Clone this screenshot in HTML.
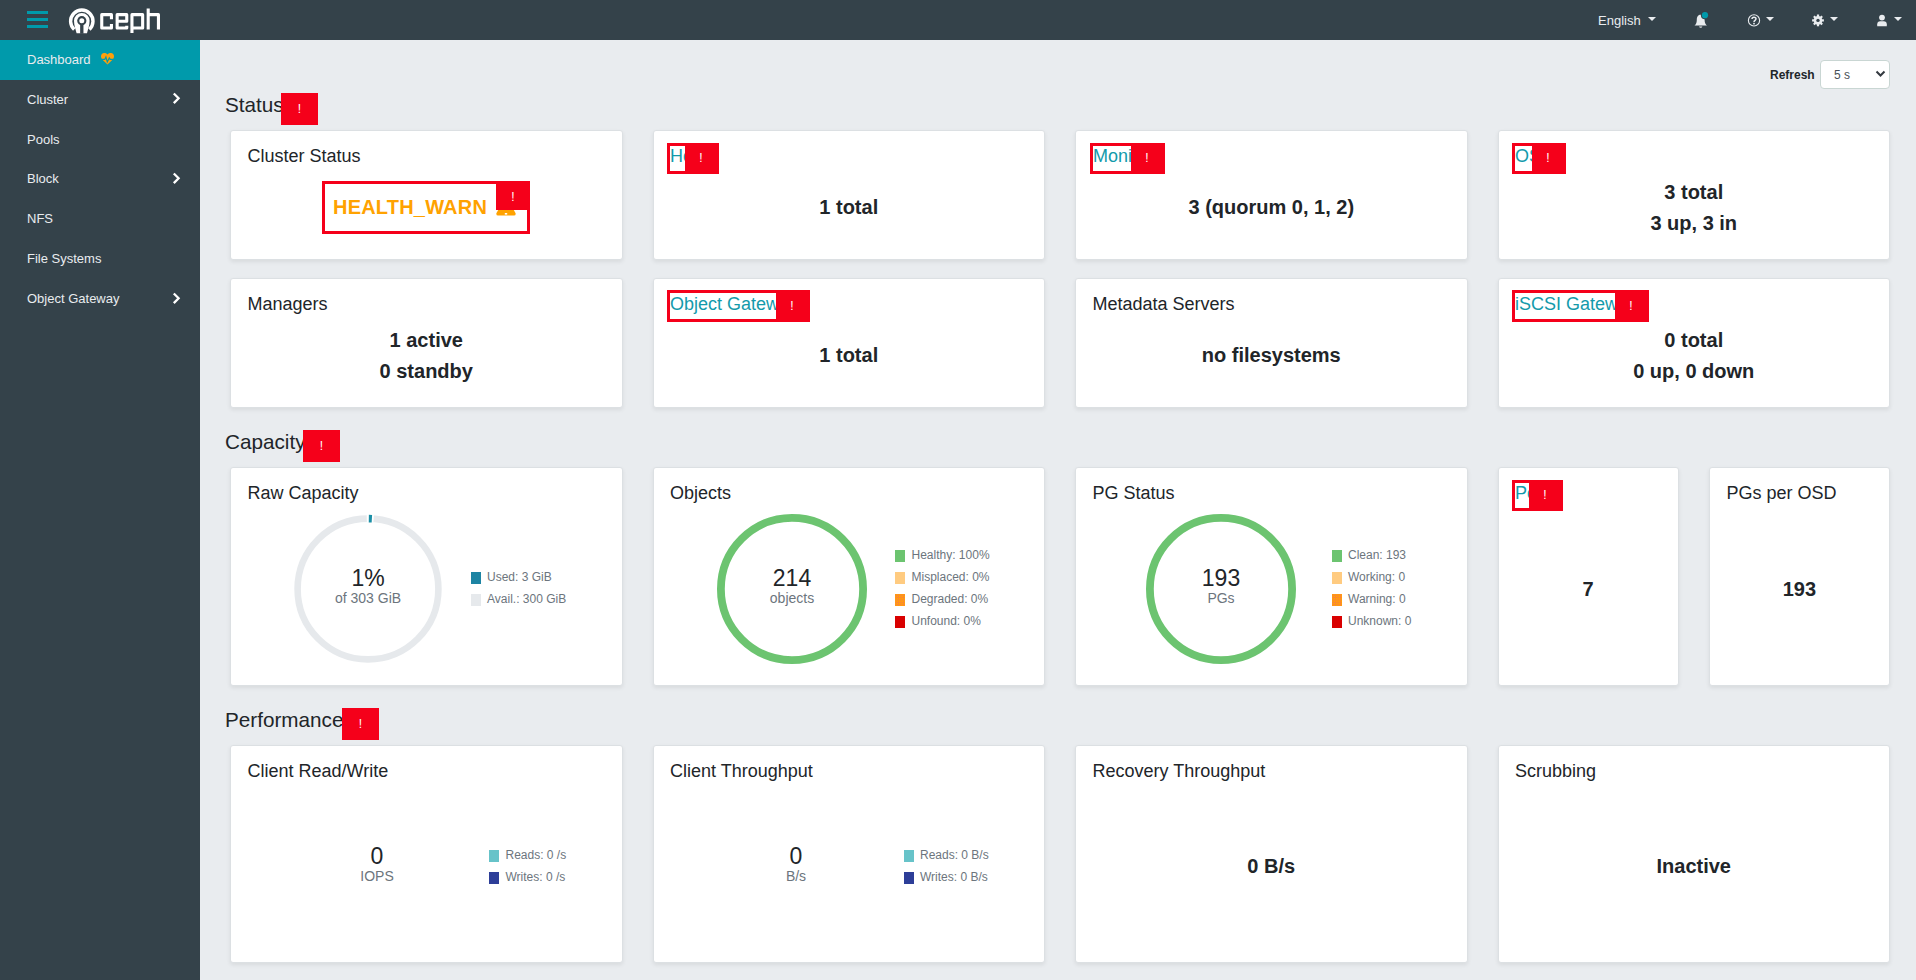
<!DOCTYPE html>
<html><head><meta charset="utf-8">
<style>
*{box-sizing:border-box;margin:0;padding:0}
html,body{width:1916px;height:980px;overflow:hidden}
body{position:relative;background:#e9ecef;font-family:"Liberation Sans",sans-serif;color:#212529}
.abs{position:absolute}
.nav{position:absolute;left:0;top:0;width:1916px;height:40px;background:#34424a}
.side{position:absolute;left:0;top:40px;width:200px;height:940px;background:#34424a}
.side .act{position:absolute;left:0;top:0;width:200px;height:40px;background:#009aab}
.si{position:absolute;left:27px;font-size:13px;color:#e9ecef;white-space:nowrap;line-height:15px}
.chev{position:absolute;left:172px;width:9px;height:13px}
.t{position:absolute;white-space:nowrap;line-height:1}
.card{position:absolute;background:#fff;border:1px solid #dce0e3;border-radius:3px;box-shadow:0 2px 4px rgba(0,0,0,.075)}
.h{font-size:20.7px;color:#212529}
.ct{font-size:18px;color:#212529}
.v{font-size:20px;font-weight:bold;color:#212529}
.tab{position:absolute;background:#f5001a;color:#fff;font-size:12px;text-align:center}
.ol{position:absolute;border:3px solid #f5001a;background:#fff}
.lk{color:#139aab}
.lg{font-size:12px;color:#6c757d}
.sq{position:absolute;width:10px;height:12px}
.dn{font-size:23px;color:#212529}
.dsub{font-size:14px;color:#6c757d}
</style></head><body>
<!-- NAVBAR -->
<div class="nav">
  <div class="abs" style="left:27px;top:11px;width:21px;height:3px;background:#009aab"></div>
  <div class="abs" style="left:27px;top:18px;width:21px;height:3px;background:#009aab"></div>
  <div class="abs" style="left:27px;top:25px;width:21px;height:3px;background:#009aab"></div>
  <svg class="abs" style="left:0;top:0" width="170" height="40" viewBox="0 0 170 40">
    <g transform="translate(64,4)">
      <path d="M10.2 25.5 A11.2 11.2 0 1 1 25.4 25.5" fill="none" stroke="#fff" stroke-width="3.4"/>
      <path d="M12.6 29.3 C11.8 25.5 10 21.8 10 16.7 A7.8 7.8 0 1 1 25.6 16.7 C25.6 21.8 23.8 25.5 23 29.3 Z" fill="#fff"/>
      <circle cx="17.8" cy="16.7" r="4.6" fill="#34424a"/>
      <rect x="16.15" y="16.7" width="3.3" height="13" fill="#34424a"/>
      <circle cx="17.8" cy="16.7" r="2.5" fill="#fff"/>
    </g>
    <g fill="none" stroke="#fff" stroke-width="3.1" stroke-linejoin="round">
      <path d="M111.45 19.2 V14.65 H101.75 V27.95 H111.45 V24"/>
      <path d="M117.15 21.25 H126.75 V14.65 H117.15 V27.95 H126.75 V25.8"/>
      <path d="M131.95 32.9 V14.65 H142.65 V27.95 H131.95"/>
      <path d="M148.2 8.5 V29.5 M148.2 14.65 H158.45 V29.5"/>
    </g>
  </svg>
  <div class="t" style="left:1598px;top:14px;font-size:13px;color:#e9ecef">English</div>
  <div class="abs" style="left:1648px;top:17px;width:0;height:0;border-left:4px solid transparent;border-right:4px solid transparent;border-top:4px solid #e9ecef"></div>
  <svg class="abs" style="left:1690px;top:8px" width="22" height="22" viewBox="0 0 22 22">
    <path d="M10.7 6.8 C7.5 6.8 6.8 9.5 6.8 12 C6.8 15 5.8 16.5 4.5 17.5 L17 17.5 C15.7 16.5 14.6 15 14.6 12 C14.6 9.5 13.9 6.8 10.7 6.8 Z M9 18.5 A1.8 1.8 0 0 0 12.4 18.5 Z" fill="#e9ecef"/>
    <circle cx="15" cy="7.2" r="4.1" fill="#34424a"/>
    <circle cx="15" cy="7.2" r="3.1" fill="#009aab"/>
  </svg>
  <svg class="abs" style="left:1746px;top:13px" width="16" height="15" viewBox="0 0 16 15">
    <circle cx="8" cy="7.4" r="5.6" fill="none" stroke="#e9ecef" stroke-width="1.1"/>
    <path d="M6 6 C6 3.6 10 3.6 10 5.8 C10 7.3 8 7.4 8 9" fill="none" stroke="#e9ecef" stroke-width="1.5"/>
    <rect x="7.2" y="9.8" width="1.6" height="1.6" fill="#e9ecef"/>
  </svg>
  <div class="abs" style="left:1766px;top:17px;width:0;height:0;border-left:4px solid transparent;border-right:4px solid transparent;border-top:4px solid #e9ecef"></div>
  <svg class="abs" style="left:1810px;top:13px" width="16" height="15" viewBox="0 0 16 15">
    <g transform="translate(8,7.4)" fill="#e9ecef">
      <circle r="4.3"/>
      <rect x="-1.1" y="-5.9" width="2.2" height="11.8"/>
      <rect x="-1.1" y="-5.9" width="2.2" height="11.8" transform="rotate(45)"/>
      <rect x="-1.1" y="-5.9" width="2.2" height="11.8" transform="rotate(90)"/>
      <rect x="-1.1" y="-5.9" width="2.2" height="11.8" transform="rotate(135)"/>
      <circle r="1.7" fill="#34424a"/>
    </g>
  </svg>
  <div class="abs" style="left:1830px;top:17px;width:0;height:0;border-left:4px solid transparent;border-right:4px solid transparent;border-top:4px solid #e9ecef"></div>
  <svg class="abs" style="left:1875px;top:13px" width="14" height="15" viewBox="0 0 14 15">
    <circle cx="7" cy="4.6" r="2.9" fill="#e9ecef"/>
    <path d="M2.2 13.2 V11.2 C2.2 9.2 3.4 8.2 5.2 8.2 H8.8 C10.6 8.2 11.8 9.2 11.8 11.2 V13.2 Z" fill="#e9ecef"/>
  </svg>
  <div class="abs" style="left:1894px;top:17px;width:0;height:0;border-left:4px solid transparent;border-right:4px solid transparent;border-top:4px solid #e9ecef"></div>
</div>
<!-- SIDEBAR -->
<div class="side">
  <div class="act"></div>
  <div class="si" style="top:12px">Dashboard</div>
  <svg class="abs" style="left:100px;top:12px" width="15" height="13" viewBox="0 0 15 13">
    <path d="M7.5 2.6 C6.5 1.2 5.3 1 4.2 1 C2.2 1 1 2.6 1 4.4 C1 5.6 1.5 6.7 2.5 7.7 L7.5 12.4 L12.5 7.7 C13.5 6.7 14 5.6 14 4.4 C14 2.6 12.8 1 10.8 1 C9.7 1 8.5 1.2 7.5 2.6 Z" fill="#ffa00a"/>
    <path d="M0 7.4 H4.8 L5.9 5.0 L7.3 9.9 L9.3 5.9 L10.2 7.4 H15" fill="none" stroke="#009aab" stroke-width="1.2"/>
  </svg>
  <div class="si" style="top:52px">Cluster</div>
  <div class="si" style="top:92px">Pools</div>
  <div class="si" style="top:131px">Block</div>
  <div class="si" style="top:171px">NFS</div>
  <div class="si" style="top:211px">File Systems</div>
  <div class="si" style="top:251px">Object Gateway</div>
  <svg class="chev" style="top:52px" viewBox="0 0 9 13"><path d="M1.8 1.5 L6.6 6.3 L1.8 11.1" fill="none" stroke="#fff" stroke-width="2.3"/></svg>
  <svg class="chev" style="top:132px" viewBox="0 0 9 13"><path d="M1.8 1.5 L6.6 6.3 L1.8 11.1" fill="none" stroke="#fff" stroke-width="2.3"/></svg>
  <svg class="chev" style="top:252px" viewBox="0 0 9 13"><path d="M1.8 1.5 L6.6 6.3 L1.8 11.1" fill="none" stroke="#fff" stroke-width="2.3"/></svg>
</div>
<!-- CONTENT -->
<div class="t" style="left:1770px;top:69px;font-size:12px;font-weight:bold">Refresh</div>
<div class="abs" style="left:1820px;top:60px;width:70px;height:29px;background:#fff;border:1px solid #c9d6d3;border-radius:4px"></div>
<div class="t" style="left:1834px;top:69px;font-size:12px;color:#495057">5 s</div>
<svg class="abs" style="left:1875px;top:70px" width="11" height="8" viewBox="0 0 11 8"><path d="M1.5 1.5 L5.5 5.5 L9.5 1.5" fill="none" stroke="#343a40" stroke-width="2"/></svg>

<!-- GEN -->
<div class="card" style="left:230px;top:130px;width:392.5px;height:130px"></div>
<div class="card" style="left:652.5px;top:130px;width:392.5px;height:130px"></div>
<div class="card" style="left:1075px;top:130px;width:392.5px;height:130px"></div>
<div class="card" style="left:1497.5px;top:130px;width:392.5px;height:130px"></div>
<div class="card" style="left:230px;top:278px;width:392.5px;height:130px"></div>
<div class="card" style="left:652.5px;top:278px;width:392.5px;height:130px"></div>
<div class="card" style="left:1075px;top:278px;width:392.5px;height:130px"></div>
<div class="card" style="left:1497.5px;top:278px;width:392.5px;height:130px"></div>
<div class="card" style="left:230px;top:467px;width:392.5px;height:219px"></div>
<div class="card" style="left:652.5px;top:467px;width:392.5px;height:219px"></div>
<div class="card" style="left:1075px;top:467px;width:392.5px;height:219px"></div>
<div class="card" style="left:1497.5px;top:467px;width:181.25px;height:219px"></div>
<div class="card" style="left:1708.75px;top:467px;width:181.25px;height:219px"></div>
<div class="card" style="left:230px;top:745px;width:392.5px;height:218px"></div>
<div class="card" style="left:652.5px;top:745px;width:392.5px;height:218px"></div>
<div class="card" style="left:1075px;top:745px;width:392.5px;height:218px"></div>
<div class="card" style="left:1497.5px;top:745px;width:392.5px;height:218px"></div>
<div class="t h" style="left:225px;top:95.18px;">Status</div>
<div class="tab" style="left:281px;top:93px;width:37px;height:32px;line-height:32px;padding-right:0px">!</div>
<div class="t h" style="left:225px;top:432.18px;">Capacity</div>
<div class="tab" style="left:303px;top:430px;width:37px;height:32px;line-height:32px;padding-right:0px">!</div>
<div class="t h" style="left:225px;top:710.18px;">Performance</div>
<div class="tab" style="left:342px;top:708px;width:37px;height:32px;line-height:32px;padding-right:0px">!</div>
<div class="t ct" style="left:247.5px;top:146.76px;">Cluster Status</div>
<div class="ol" style="left:322px;top:181px;width:208px;height:53px"></div>
<div class="t v" style="left:333px;top:197.07px;color:#ffa200;letter-spacing:0.2px">HEALTH_WARN</div>
<svg class="abs" style="left:496px;top:195px" width="20" height="21" viewBox="0 0 20 21"><path d="M10 1 L19.6 18.2 Q20 20.5 18 20.5 H2 Q0 20.5 0.4 18.2 Z" fill="#ffa200"/><rect x="8.8" y="18" width="2.4" height="1.6" fill="#fff"/></svg>
<div class="tab" style="left:496px;top:181px;width:34px;height:29px;line-height:33px;padding-right:0px">!</div>
<div class="ol" style="left:667px;top:143px;width:52px;height:31px;overflow:hidden"></div>
<div class="t ct lk" style="left:670px;top:146.76px;">Hosts</div>
<div class="tab" style="left:685px;top:143px;width:34px;height:31px;line-height:31px;padding-right:2px">!</div>
<div class="ol" style="left:1090px;top:143px;width:75px;height:31px;overflow:hidden"></div>
<div class="t ct lk" style="left:1093px;top:146.76px;">Monitors</div>
<div class="tab" style="left:1131px;top:143px;width:34px;height:31px;line-height:31px;padding-right:2px">!</div>
<div class="ol" style="left:1512px;top:143px;width:54px;height:31px;overflow:hidden"></div>
<div class="t ct lk" style="left:1515px;top:146.76px;">OSDs</div>
<div class="tab" style="left:1532px;top:143px;width:34px;height:31px;line-height:31px;padding-right:2px">!</div>
<div class="t v" style="left:652.5px;top:197.07px;width:392.5px;text-align:center;">1 total</div>
<div class="t v" style="left:1075px;top:197.07px;width:392.5px;text-align:center;">3 (quorum 0, 1, 2)</div>
<div class="t v" style="left:1497.5px;top:182.07px;width:392.5px;text-align:center;">3 total</div>
<div class="t v" style="left:1497.5px;top:213.07px;width:392.5px;text-align:center;">3 up, 3 in</div>
<div class="t ct" style="left:247.5px;top:294.76px;">Managers</div>
<div class="t v" style="left:230px;top:330.07px;width:392.5px;text-align:center;">1 active</div>
<div class="t v" style="left:230px;top:361.07px;width:392.5px;text-align:center;">0 standby</div>
<div class="ol" style="left:667px;top:290px;width:143px;height:32px;overflow:hidden"></div>
<div class="t ct lk" style="left:670px;top:294.76px;">Object Gateways</div>
<div class="tab" style="left:776px;top:290px;width:34px;height:32px;line-height:32px;padding-right:2px">!</div>
<div class="t v" style="left:652.5px;top:345.07px;width:392.5px;text-align:center;">1 total</div>
<div class="t ct" style="left:1092.5px;top:294.76px;">Metadata Servers</div>
<div class="t v" style="left:1075px;top:345.07px;width:392.5px;text-align:center;">no filesystems</div>
<div class="ol" style="left:1512px;top:290px;width:137px;height:32px;overflow:hidden"></div>
<div class="t ct lk" style="left:1515px;top:294.76px;">iSCSI Gateways</div>
<div class="tab" style="left:1615px;top:290px;width:34px;height:32px;line-height:32px;padding-right:2px">!</div>
<div class="t v" style="left:1497.5px;top:330.07px;width:392.5px;text-align:center;">0 total</div>
<div class="t v" style="left:1497.5px;top:361.07px;width:392.5px;text-align:center;">0 up, 0 down</div>
<div class="t ct" style="left:247.5px;top:483.76px;">Raw Capacity</div>
<div class="t ct" style="left:670px;top:483.76px;">Objects</div>
<div class="t ct" style="left:1092.5px;top:483.76px;">PG Status</div>
<div class="ol" style="left:1512px;top:480px;width:51px;height:31px;overflow:hidden"></div>
<div class="t ct lk" style="left:1515px;top:483.76px;">Pools</div>
<div class="tab" style="left:1529px;top:480px;width:34px;height:31px;line-height:31px;padding-right:2px">!</div>
<div class="t ct" style="left:1726.5px;top:483.76px;">PGs per OSD</div>
<div class="t v" style="left:1497.5px;top:579.07px;width:181.25px;text-align:center;">7</div>
<div class="t v" style="left:1708.75px;top:579.07px;width:181.25px;text-align:center;">193</div>
<svg class="abs" style="left:288.15px;top:509px" width="160" height="160" viewBox="0 0 160 160"><circle cx="80" cy="80" r="70.4" fill="none" stroke="#e6e9ec" stroke-width="6.6"/><path d="M78.77 9.61 A70.4 70.4 0 0 1 85.65 9.83" fill="none" stroke="#fff" stroke-width="7.6"/><path d="M80.81 9.60 A70.4 70.4 0 0 1 83.88 9.71" fill="none" stroke="#1a8fa6" stroke-width="7.6"/></svg>
<div class="t dn" style="left:308px;top:566.53px;width:120px;text-align:center;">1%</div>
<div class="t dsub" style="left:308px;top:591.15px;width:120px;text-align:center;">of 303 GiB</div>
<svg class="abs" style="left:712px;top:509px" width="160" height="160" viewBox="0 0 160 160"><circle cx="80" cy="80" r="71.1" fill="none" stroke="#6cc470" stroke-width="7.8"/></svg>
<div class="t dn" style="left:732px;top:566.53px;width:120px;text-align:center;">214</div>
<div class="t dsub" style="left:732px;top:591.15px;width:120px;text-align:center;">objects</div>
<svg class="abs" style="left:1141.2px;top:508.79999999999995px" width="160" height="160" viewBox="0 0 160 160"><circle cx="80" cy="80" r="71.1" fill="none" stroke="#6cc470" stroke-width="7.8"/></svg>
<div class="t dn" style="left:1161px;top:566.53px;width:120px;text-align:center;">193</div>
<div class="t dsub" style="left:1161px;top:591.15px;width:120px;text-align:center;">PGs</div>
<div class="sq" style="left:471px;top:572px;background:#1d84a3"></div>
<div class="t lg" style="left:487px;top:570.84px;">Used: 3 GiB</div>
<div class="sq" style="left:471px;top:594px;background:#e6e9ec"></div>
<div class="t lg" style="left:487px;top:592.84px;">Avail.: 300 GiB</div>
<div class="sq" style="left:895px;top:550px;background:#6cc470"></div>
<div class="t lg" style="left:911.5px;top:548.84px;">Healthy: 100%</div>
<div class="sq" style="left:895px;top:572px;background:#ffcb80"></div>
<div class="t lg" style="left:911.5px;top:570.84px;">Misplaced: 0%</div>
<div class="sq" style="left:895px;top:594px;background:radial-gradient(circle at 1.2px 1.2px,#f25c7a 0.5px,transparent 0.75px) 0 0/2.4px 2.4px,#ff9a12"></div>
<div class="t lg" style="left:911.5px;top:592.84px;">Degraded: 0%</div>
<div class="sq" style="left:895px;top:616px;background:#d90000"></div>
<div class="t lg" style="left:911.5px;top:614.84px;">Unfound: 0%</div>
<div class="sq" style="left:1331.5px;top:550px;background:#6cc470"></div>
<div class="t lg" style="left:1348px;top:548.84px;">Clean: 193</div>
<div class="sq" style="left:1331.5px;top:572px;background:#ffcb80"></div>
<div class="t lg" style="left:1348px;top:570.84px;">Working: 0</div>
<div class="sq" style="left:1331.5px;top:594px;background:radial-gradient(circle at 1.2px 1.2px,#f25c7a 0.5px,transparent 0.75px) 0 0/2.4px 2.4px,#ff9a12"></div>
<div class="t lg" style="left:1348px;top:592.84px;">Warning: 0</div>
<div class="sq" style="left:1331.5px;top:616px;background:#d90000"></div>
<div class="t lg" style="left:1348px;top:614.84px;">Unknown: 0</div>
<div class="t ct" style="left:247.5px;top:761.76px;">Client Read/Write</div>
<div class="t ct" style="left:670px;top:761.76px;">Client Throughput</div>
<div class="t ct" style="left:1092.5px;top:761.76px;">Recovery Throughput</div>
<div class="t ct" style="left:1515px;top:761.76px;">Scrubbing</div>
<div class="t dn" style="left:317px;top:844.53px;width:120px;text-align:center;">0</div>
<div class="t dsub" style="left:317px;top:869.15px;width:120px;text-align:center;">IOPS</div>
<div class="sq" style="left:489px;top:850px;background:#67c3c9"></div>
<div class="t lg" style="left:505.5px;top:848.84px;">Reads: 0 /s</div>
<div class="sq" style="left:489px;top:872px;background:#2d3e98"></div>
<div class="t lg" style="left:505.5px;top:870.84px;">Writes: 0 /s</div>
<div class="t dn" style="left:736px;top:844.53px;width:120px;text-align:center;">0</div>
<div class="t dsub" style="left:736px;top:869.15px;width:120px;text-align:center;">B/s</div>
<div class="sq" style="left:904px;top:850px;background:#67c3c9"></div>
<div class="t lg" style="left:920px;top:848.84px;">Reads: 0 B/s</div>
<div class="sq" style="left:904px;top:872px;background:#2d3e98"></div>
<div class="t lg" style="left:920px;top:870.84px;">Writes: 0 B/s</div>
<div class="t v" style="left:1075px;top:856.07px;width:392.5px;text-align:center;">0 B/s</div>
<div class="t v" style="left:1497.5px;top:856.07px;width:392.5px;text-align:center;">Inactive</div>
<!-- /GEN -->
</body></html>
